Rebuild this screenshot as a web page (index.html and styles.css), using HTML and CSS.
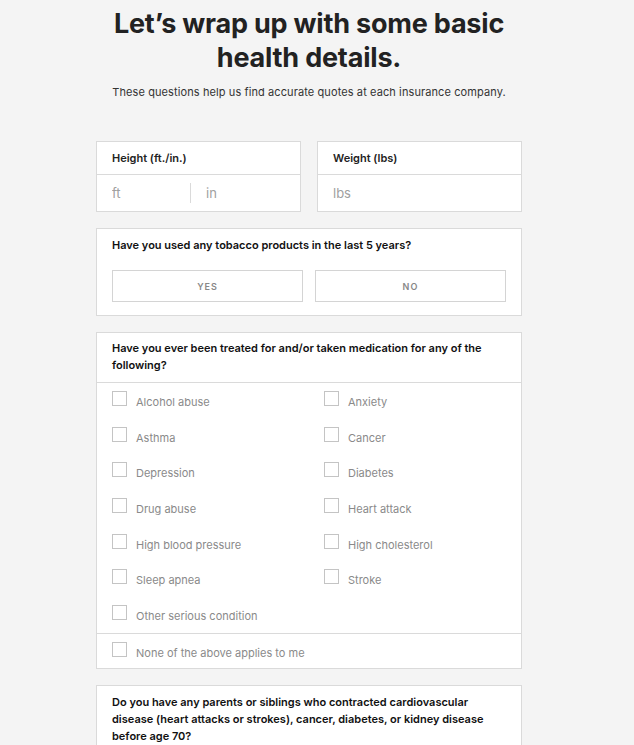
FILE: index.html
```html
<html>
<head>
    <link rel="stylesheet" href="styles.css">
</head>

<body>

<div class="page">
    <h1>Let’s wrap up with some basic health details.</h1>
    <p class="intro">These questions help us find accurate quotes at each insurance company.</p>

    <div class="row">
        <div class="card">
            <div class="card-head">Height (ft./in.)</div>
            <div class="split">
                <input type="text" class="short" placeholder="ft">
                <span class="divider"></span>
                <input type="text" placeholder="in">
            </div>
        </div>
        <div class="card">
            <div class="card-head">Weight (lbs)</div>
            <div class="split">
                <input type="text" placeholder="lbs">
            </div>
        </div>
    </div>

    <div class="card question">
        <p class="ask">Have you used any tobacco products in the last 5 years?</p>
        <div class="choices">
            <button>YES</button>
            <button>NO</button>
        </div>
    </div>

    <div class="card">
        <p class="ask ask-head">Have you ever been treated for and/or taken medication for any of the following?</p>
        <div class="checks">
            <label class="check"><input type="checkbox"><span>Alcohol abuse</span></label>
            <label class="check"><input type="checkbox"><span>Anxiety</span></label>
            <label class="check"><input type="checkbox"><span>Asthma</span></label>
            <label class="check"><input type="checkbox"><span>Cancer</span></label>
            <label class="check"><input type="checkbox"><span>Depression</span></label>
            <label class="check"><input type="checkbox"><span>Diabetes</span></label>
            <label class="check"><input type="checkbox"><span>Drug abuse</span></label>
            <label class="check"><input type="checkbox"><span>Heart attack</span></label>
            <label class="check"><input type="checkbox"><span>High blood pressure</span></label>
            <label class="check"><input type="checkbox"><span>High cholesterol</span></label>
            <label class="check"><input type="checkbox"><span>Sleep apnea</span></label>
            <label class="check"><input type="checkbox"><span>Stroke</span></label>
            <label class="check"><input type="checkbox"><span>Other serious condition</span></label>
        </div>
        <div class="none">
            <label class="check"><input type="checkbox"><span>None of the above applies to me</span></label>
        </div>
    </div>

    <div class="card question">
        <p class="ask">Do you have any parents or siblings who contracted cardiovascular disease (heart attacks or strokes), cancer, diabetes, or kidney disease before age 70?</p>
    </div>
</div>

</body>
</html>
```

FILE: styles.css
```css
body {
    font-family: Inter, "Noto Sans", sans-serif;
    background-color: #f4f4f4;
    margin: 0;
    padding: 0 16px 0 0;
}

.page {
    width: 426px;
    margin: 0 auto;
    padding-top: 7px;
}

h1 {
    font-size: 27px;
    line-height: 34px;
    font-weight: 700;
    text-align: center;
    color: #222;
    margin: 0 -20px;
    letter-spacing: -0.2px;
}

.intro {
    font-size: 11px;
    line-height: 16px;
    text-align: center;
    color: #333;
    letter-spacing: 0.1px;
    margin: 9px -20px 41px;
}

.card {
    background-color: #fff;
    border: 1px solid #dadada;
    margin-bottom: 16px;
}

.row {
    display: flex;
    gap: 16px;
}

.row .card {
    flex: 1 1 0;
    min-width: 0;
}

.card-head {
    font-size: 11px;
    font-weight: 600;
    color: #222;
    line-height: 32px;
    padding: 0 15px;
    border-bottom: 1px solid #dadada;
}

.split {
    display: flex;
    align-items: center;
    height: 36px;
}

.split input {
    flex: 1 1 0;
    min-width: 0;
    width: 0;
    border: none;
    outline: none;
    font-family: inherit;
    font-size: 13px;
    padding: 0 15px;
    background: transparent;
}

.split input.short {
    flex: 0 0 93px;
}

.split input::placeholder {
    color: #a0a0a0;
}

.divider {
    width: 1px;
    height: 20px;
    background-color: #dadada;
}

.question {
    padding: 8px 15px 13px;
}

.ask {
    font-size: 11px;
    font-weight: 600;
    line-height: 17px;
    color: #111;
    margin: 0 0 16px;
}

.question .ask:last-child {
    margin-bottom: 0;
}

.ask-head {
    padding: 7px 15px 8px;
    margin: 0;
    border-bottom: 1px solid #dadada;
}

.choices {
    display: flex;
    gap: 12px;
}

.choices button {
    flex: 1;
    height: 32px;
    background: #fff;
    border: 1px solid #d4d4d4;
    font-family: inherit;
    font-size: 9px;
    font-weight: 600;
    letter-spacing: 1px;
    color: #888;
}

.checks {
    display: grid;
    grid-template-columns: 1fr 1fr;
    grid-auto-rows: 35.7px;
}

.check {
    display: flex;
    align-items: flex-start;
    padding: 8px 0 0 15px;
    box-sizing: border-box;
    font-size: 11px;
    color: #8a8a8a;
}

.check input {
    appearance: none;
    width: 15px;
    height: 15px;
    margin: 0 9px 0 0;
    border: 1px solid #c4c4c4;
    background: #fff;
}

.check span {
    padding-top: 3px;
    line-height: 16px;
}

.none {
    border-top: 1px solid #dadada;
}

.none .check {
    height: 34px;
}
```
